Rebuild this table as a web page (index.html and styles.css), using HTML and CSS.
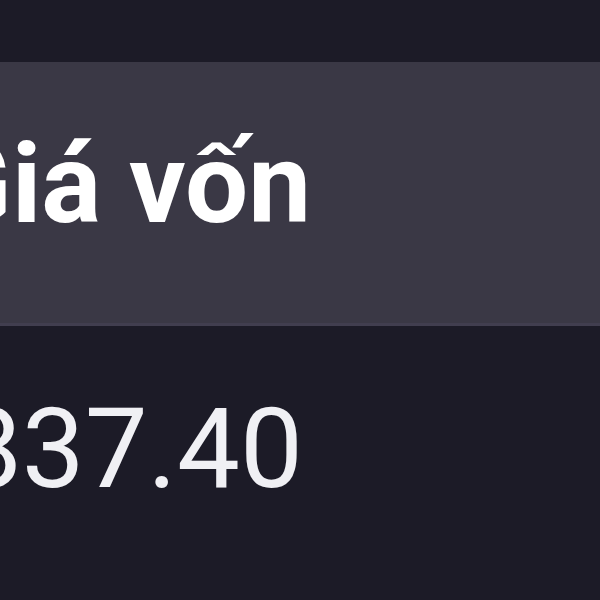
FILE: index.html
```html
<!DOCTYPE html>
<html lang="vi">
<head>
  <meta charset="UTF-8">
  <meta name="viewport" content="width=device-width, initial-scale=1.0">
  <title>Giá vốn</title>
  <link rel="stylesheet" href="styles.css">
</head>
<body>

  <div class="table">
    <div class="row head-row">
      <div class="cell head-cell">Giá vốn</div>
    </div>
    <div class="row body-row">
      <div class="cell num-cell">1,837.40</div>
    </div>
  </div>

</body>
</html>
```

FILE: styles.css
```css
    body {
      margin: 0;
      background: #1c1b27;
      font-family: Roboto, 'Liberation Sans', Arial, sans-serif;
      overflow: hidden;
    }

    .table {
      padding-top: 62px;
    }

    .row {
      display: flex;
      box-sizing: border-box;
    }

    .head-row {
      height: 264px;
      padding-top: 66px;
      background: #3a3845;
      border-bottom: 3px solid #413e4f;
    }

    .body-row {
      height: 274px;
      padding-top: 67px;
    }

    .cell {
      display: flex;
      justify-content: flex-end;
      width: 311px;
      flex-shrink: 0;
      white-space: nowrap;
      line-height: 1;
      font-size: 112px;
    }

    .head-cell {
      font-weight: bold;
      color: #ffffff;
    }

    .num-cell {
      color: #f0f0f4;
      padding-right: 8px;
      box-sizing: border-box;
    }
```
